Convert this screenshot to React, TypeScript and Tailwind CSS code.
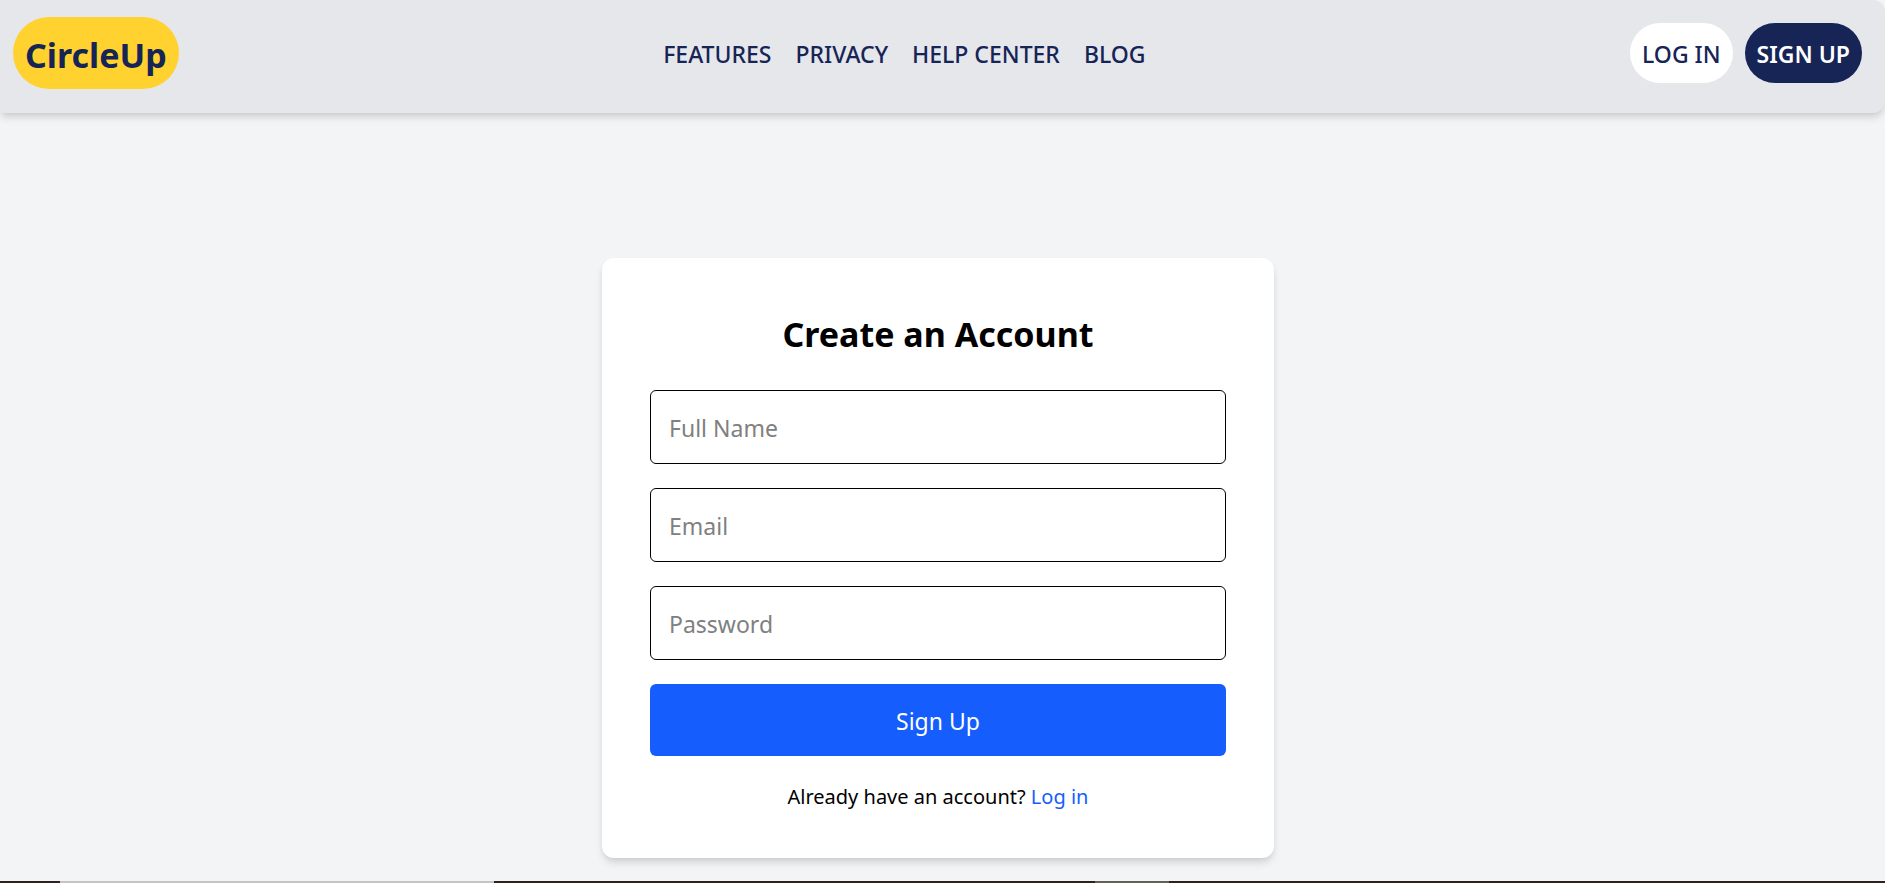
import { useState } from "react";

const navLinks = ["Features", "Privacy", "Help Center", "Blog"];

const fields = [
  { id: "name", label: "Full Name", type: "text" },
  { id: "email", label: "Email", type: "email" },
  { id: "password", label: "Password", type: "password" },
];

function Header() {
  return (
    <header className="flex h-[113px] items-start justify-between rounded-r-xl bg-gray-200 pr-[23px] pl-[13px] text-[#162456] shadow-[0_6px_9px_-1px_rgb(0_0_0/0.1),0_3px_6px_-2px_rgb(0_0_0/0.1)]">
      <div className="pt-[17px]">
        <a href="#" className="flex h-[72px] items-center rounded-full bg-[#ffd230] px-3 pt-1 text-[34px] font-bold">
          CircleUp
        </a>
      </div>
      <nav className="flex gap-6 pt-9 text-[23px]/9 font-medium uppercase">
        {navLinks.map((link) => (
          <a key={link} href="#">
            {link}
          </a>
        ))}
      </nav>
      <div className="flex gap-3 pt-[23px] text-[23px]">
        <button className="h-[60px] rounded-full bg-white px-3 pt-0.5 font-medium">LOG IN</button>
        <button className="h-[60px] rounded-full bg-[#162456] px-3 pt-0.5 font-semibold text-white">SIGN UP</button>
      </div>
    </header>
  );
}

function SignUpForm() {
  const [values, setValues] = useState<Record<string, string>>({});

  return (
    <form
      onSubmit={(e) => e.preventDefault()}
      className="w-full max-w-2xl rounded-xl bg-white p-12 shadow-[0_6px_9px_-1px_rgb(0_0_0/0.1),0_3px_6px_-2px_rgb(0_0_0/0.1)]"
    >
      <h1 className="mb-8 pt-1 text-center text-[34px]/12 font-bold">Create an Account</h1>
      <div className="flex flex-col gap-6 text-[23px]/9">
        {fields.map((f) => (
          <input
            key={f.id}
            id={f.id}
            type={f.type}
            aria-label={f.label}
            placeholder={f.label}
            value={values[f.id] ?? ""}
            onChange={(e) => setValues({ ...values, [f.id]: e.target.value })}
            className="w-full rounded-md border border-black px-[18px] pt-[19px] pb-[17px] placeholder:text-[#808080]"
          />
        ))}
        <button type="submit" className="rounded-md bg-[#155dfc] pt-[19px] pb-[17px] text-white">
          Sign Up
        </button>
      </div>
      <p className="mt-[26px] mb-[-2px] text-center text-xl/[30px]">
        Already have an account?{" "}
        <a href="#" className="text-[#155dfc]">
          Log in
        </a>
      </p>
    </form>
  );
}

export default function App() {
  return (
    <div className="flex min-h-screen flex-col bg-gray-100 font-['Noto_Sans',sans-serif] text-black">
      <Header />
      <main className="mr-[9px] flex grow items-end justify-center pt-[145px] pb-[23px]">
        <SignUpForm />
      </main>
      <div className="flex h-[2px] bg-[#30201e]">
        <div className="ml-[3.2%] w-[23%] bg-[#c4c4c4]" />
        <div className="ml-[31.9%] w-[3.9%] bg-[#65605a]" />
      </div>
    </div>
  );
}
